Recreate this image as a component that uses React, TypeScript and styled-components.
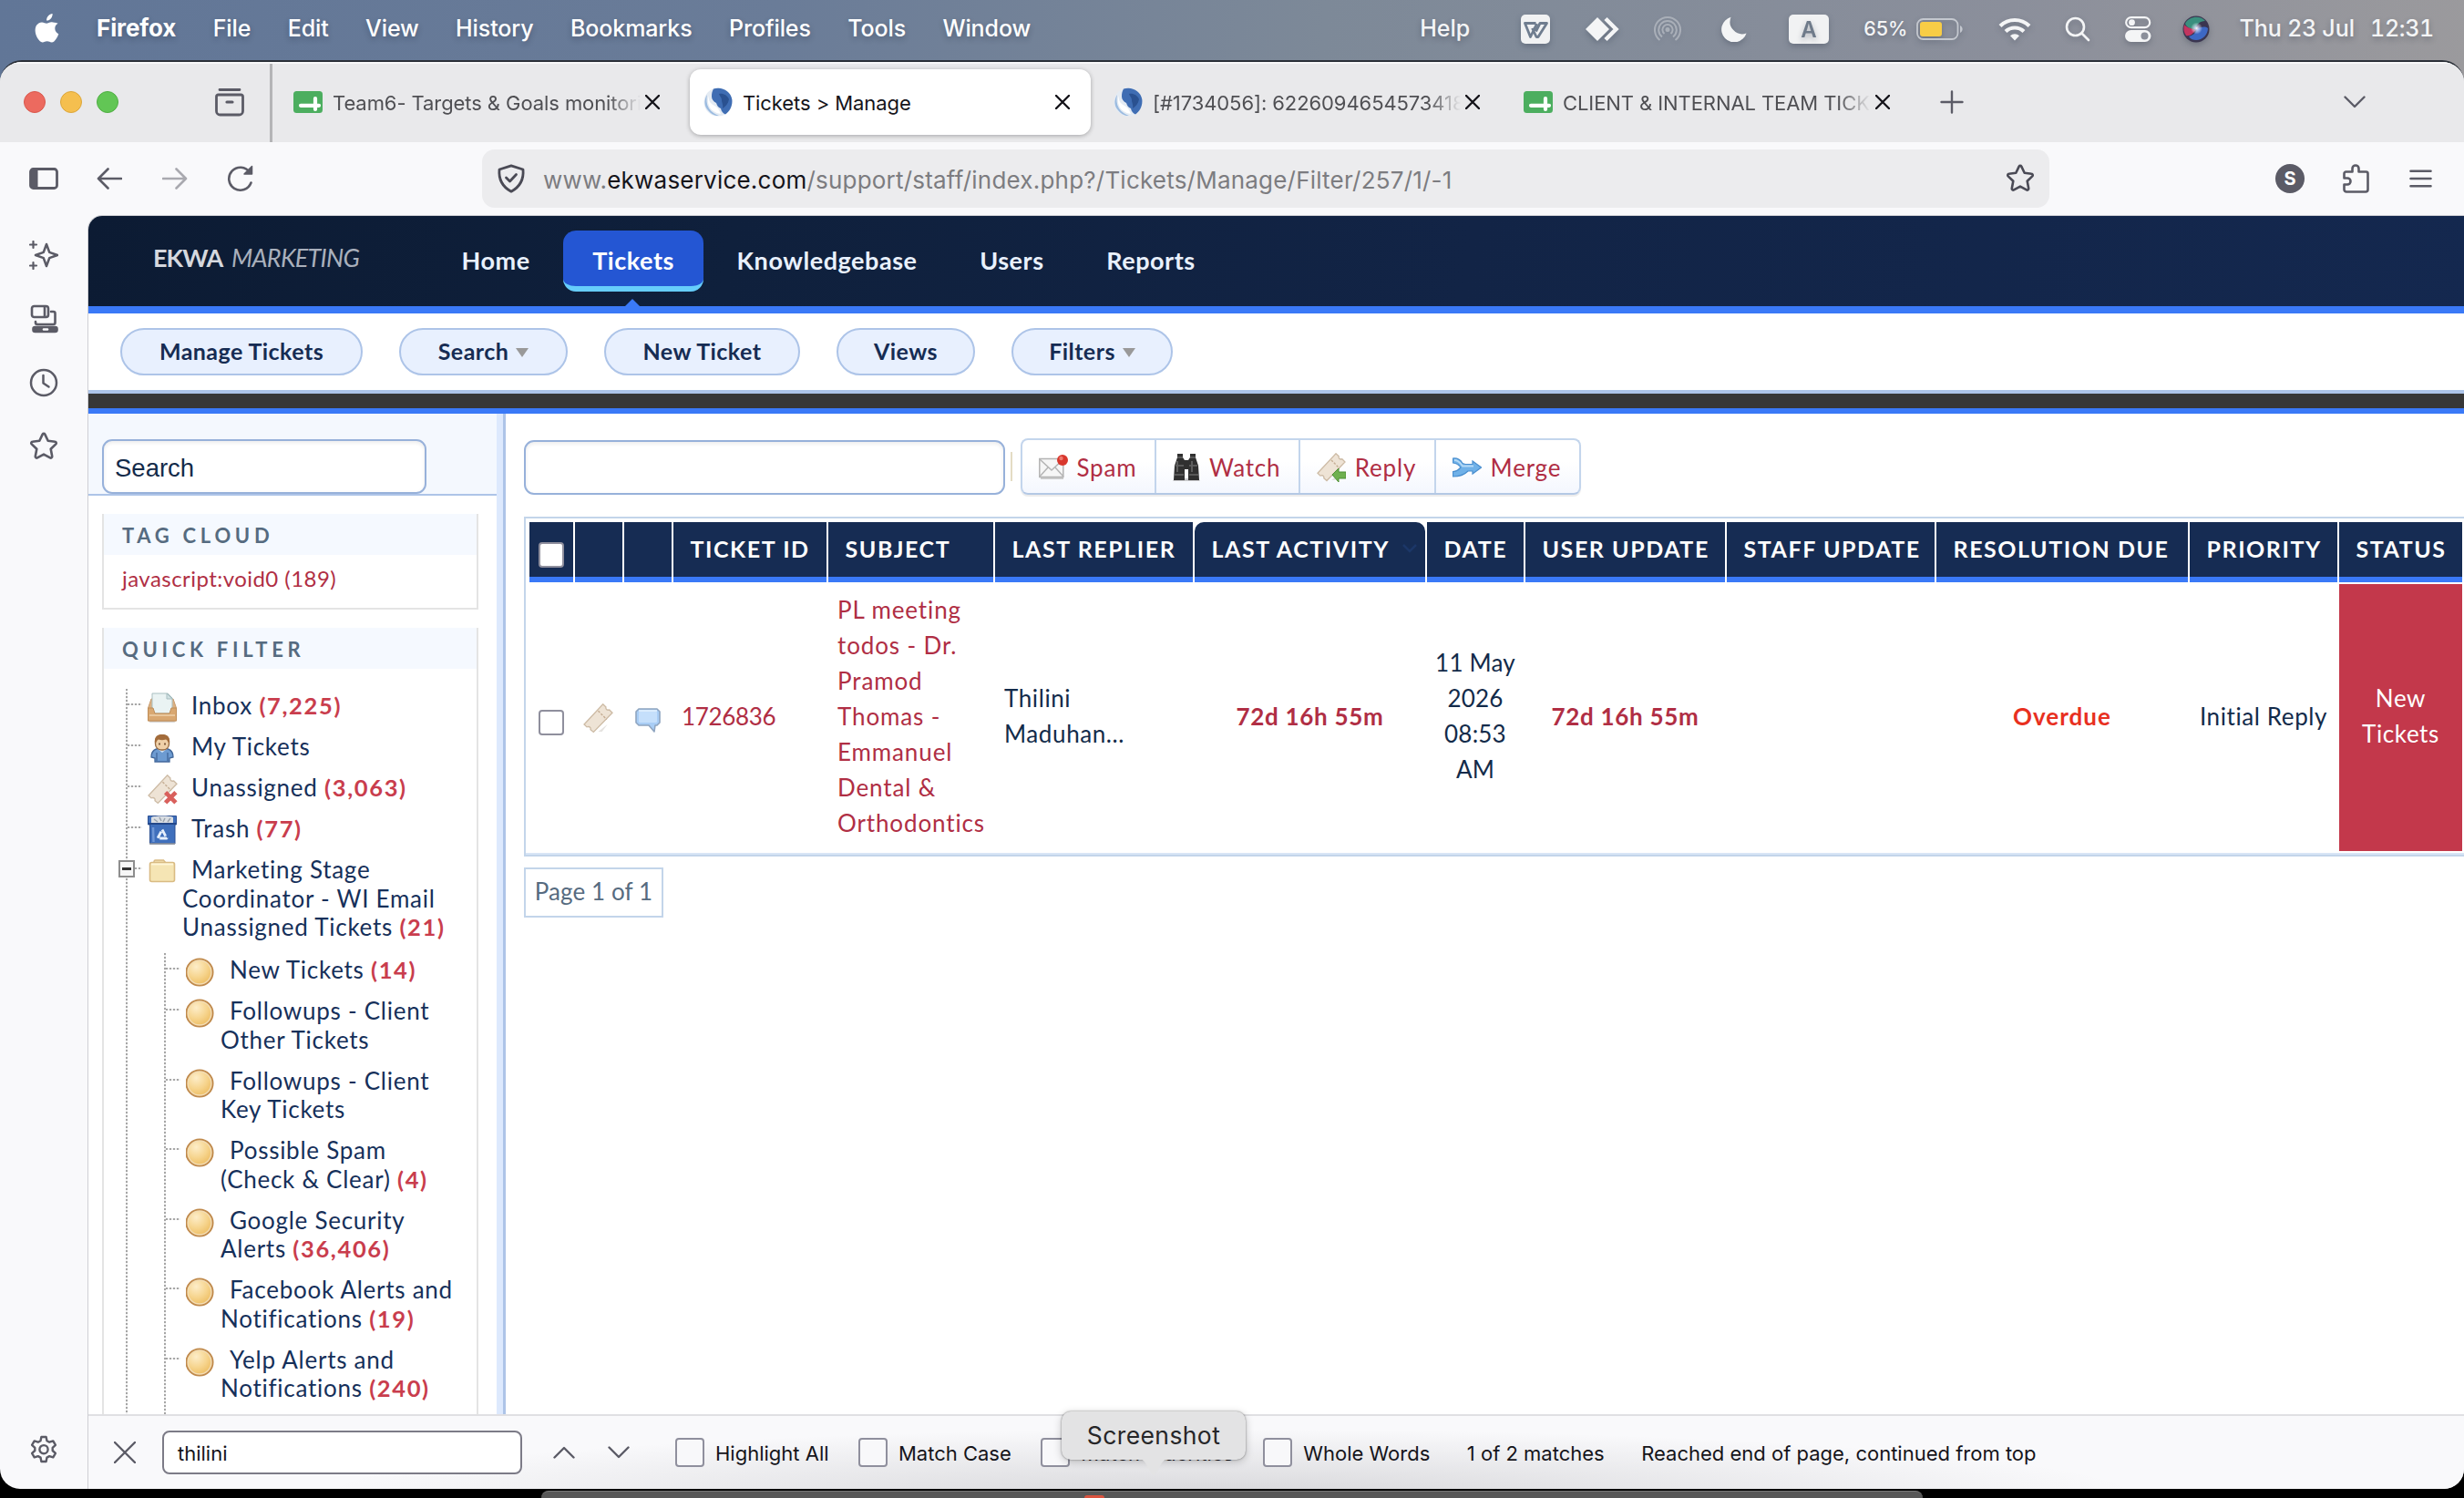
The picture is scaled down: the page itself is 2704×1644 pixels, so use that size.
import React from 'react';
import styled, { createGlobalStyle, css } from 'styled-components';

const UI = 'Inter, "Liberation Sans", sans-serif';
const SITE = 'Lato, "Open Sans", sans-serif';

const GlobalStyle = createGlobalStyle`
  * { box-sizing: border-box; }
  html, body { margin: 0; padding: 0; overflow: hidden; }
  body { font-family: ${UI}; }
  svg { display: block; flex: none; }
`;

const Screen = styled.div`
  position: relative;
  width: 2704px;
  height: 1644px;
  display: flex;
  flex-direction: column;
  overflow: hidden;
  background:
    linear-gradient(to bottom, transparent 800px, #000 800px),
    linear-gradient(95deg, #617697 0, #6a7c98 850px, #7d8998 1450px, #8b8f9b 2200px, #9b9a9d 2704px);
`;

/* ---------- macOS menu bar ---------- */

const MenuBar = styled.header`
  height: 66px;
  padding: 0 34px 4px 37px;
  display: flex;
  align-items: center;
  color: #fff;
  font-size: 25px;
  font-weight: 500;
  text-shadow: 0 3px 6px rgba(20, 30, 50, 0.3);
  white-space: nowrap;
`;
const MenuItems = styled.nav`
  display: flex;
  gap: 40.4px;
  margin-left: 39px;
`;
const MenuItem = styled.span<{ $strong?: boolean }>`
  font-weight: ${p => (p.$strong ? 700 : 500)};
  font-size: ${p => (p.$strong ? 26 : 25)}px;
  letter-spacing: -0.1px;
  line-height: 32px;
`;
const StatusArea = styled.div`
  display: flex;
  align-items: center;
  margin-left: auto;
  color: #f4f5f6;
`;
const Status = styled.span<{ $gap: number; $small?: boolean }>`
  margin-left: ${p => p.$gap}px;
  font-size: ${p => (p.$small ? 21.5 : 25)}px;
  display: flex;
  line-height: 32px;
  svg { filter: drop-shadow(0 3px 3px rgba(20, 30, 50, 0.25)); position: relative; top: 1px; }
`;
const Clock = styled.span`
  width: 69px;
  margin-left: 17px;
  line-height: 32px;
  font-variant-numeric: tabular-nums;
  letter-spacing: -0.3px;
`;

/* ---------- browser window ---------- */

const BrowserWindow = styled.div`
  height: 1568px;
  flex: none;
  display: flex;
  flex-direction: column;
  border-top: 2px solid #2b3038;
  border-radius: 24px 24px 22px 22px;
  overflow: hidden;
  background: #f9f9fb;
`;
const TabStrip = styled.div`
  height: 88px;
  flex: none;
  display: flex;
  align-items: center;
  padding: 0 108px 2px 26px;
  background: #e9e9eb;
  border-top: 2px solid #f8f8f9;
  color: #5b5b66;
`;
const Lights = styled.div`
  display: flex;
  gap: 16px;
  margin-right: 106px;
`;
const Light = styled.i<{ $color: string; $edge: string }>`
  width: 24px;
  height: 24px;
  border-radius: 50%;
  background: ${p => p.$color};
  border: 1px solid ${p => p.$edge};
`;
const StripDivider = styled.i`
  width: 3px;
  height: 86px;
  margin: 2px 8px 0 28px;
  background: #b4b4b6;
`;
const Tabs = styled.div`
  display: flex;
  gap: 10px;
  margin-right: 32px;
`;
const Tab = styled.div<{ $active?: boolean }>`
  width: 440px;
  height: 72px;
  padding: 0 23px 0 15px;
  display: flex;
  align-items: center;
  border-radius: 12px;
  font-size: 22px;
  color: #4f4f53;
  ${p => p.$active && css`
    background: #fff;
    color: #15141a;
    box-shadow: 0 1px 5px rgba(0, 0, 0, 0.3);
  `}
`;
const TabTitle = styled.span<{ $fade?: boolean }>`
  flex: 1;
  min-width: 0;
  margin: 2px 5px 0 11px;
  overflow: hidden;
  white-space: nowrap;
  letter-spacing: -0.08px;
  ${p => p.$fade && css`mask-image: linear-gradient(to right, #000 calc(100% - 36px), transparent);`}
`;
const PushRight = styled.div`margin-left: auto;`;

const Toolbar = styled.div`
  height: 80px;
  flex: none;
  display: flex;
  align-items: center;
  padding-left: 32px;
  color: #5b5b66;
`;
const ToolSlot = styled.span<{ $gap?: number; $dim?: boolean }>`
  margin-left: ${p => p.$gap ?? 0}px;
  opacity: ${p => (p.$dim ? 0.5 : 1)};
`;
const UrlBar = styled.div`
  width: 1720px;
  height: 64px;
  margin-left: 250px;
  padding: 0 16px;
  display: flex;
  align-items: center;
  border-radius: 14px;
  background: #ececee;
  color: #4a4a55;
`;
const Url = styled.span`
  flex: 1;
  margin: 3px 0 0 19px;
  font-size: 26px;
  letter-spacing: 0.21px;
  color: #7c7c80;
  b { font-weight: 400; color: #15141a; }
`;
const Avatar = styled.span`
  width: 32px;
  height: 32px;
  margin-left: 248px;
  border-radius: 50%;
  background: #5b5b66;
  color: #fff;
  font-size: 20px;
  font-weight: 700;
  display: flex;
  align-items: center;
  justify-content: center;
`;

const BrowserBody = styled.div`
  flex: 1;
  min-height: 0;
  display: flex;
`;
const Rail = styled.aside`
  width: 96px;
  padding: 28px 0 27px;
  display: flex;
  flex-direction: column;
  align-items: center;
  gap: 38px;
  color: #5b5b66;
  svg:last-child { margin-top: auto; }
`;
const Viewport = styled.div`
  flex: 1;
  min-width: 0;
  display: flex;
  flex-direction: column;
  border-left: 1px solid #cfcfd4;
  border-top: 1px solid #cfcfd4;
  border-top-left-radius: 16px;
  overflow: hidden;
`;
const Site = styled.div`
  flex: 1;
  min-height: 0;
  display: flex;
  flex-direction: column;
  overflow: hidden;
  background: #fff;
  font-family: ${SITE};
`;

/* ---------- help desk header ---------- */

const SiteHeader = styled.div`
  height: 107px;
  flex: none;
  display: flex;
  padding: 16px 0 0 71px;
  background: linear-gradient(100deg, #0c1b33 0, #0f203c 700px, #122446 1500px, #14284f 2607px);
  border-bottom: 8px solid #3a79f7;
`;
const Logo = styled.div`
  width: 306.5px;
  padding-top: 13px;
  font-size: 27px;
  line-height: 34px;
  letter-spacing: -0.9px;
  font-weight: 700;
  color: #d5d8de;
  i { font-weight: 400; color: #a9b0bc; margin-left: 5px; letter-spacing: -0.75px; }
`;
const MainNav = styled.nav`
  display: flex;
  align-items: flex-start;
  gap: 4.6px;
`;
const NavLink = styled.a<{ $active?: boolean }>`
  position: relative;
  height: 67px;
  padding: 4px 32px 0;
  display: flex;
  align-items: center;
  font-size: 27px;
  font-weight: 700;
  letter-spacing: 0.55px;
  color: #e9f1fd;
  border-bottom: 6px solid transparent;
  border-radius: 14px;
  ${p => p.$active && css`
    color: #fff;
    background: #2456d3;
    border-bottom-color: #66cdfb;
    &::after {
      content: '';
      position: absolute;
      left: 50%;
      top: 75px;
      margin-left: -9px;
      border: 8px solid transparent;
      border-top: 0;
      border-bottom-color: #3a79f7;
    }
  `}
`;
const SubNav = styled.div`
  height: 88px;
  flex: none;
  padding: 16px 0 0 35px;
  display: flex;
  gap: 40px;
  background: #fff;
  border-bottom: 4px solid #adc4e8;
`;
const Pill = styled.a<{ $width: number }>`
  width: ${p => p.$width}px;
  height: 52px;
  padding-bottom: 3px;
  display: flex;
  align-items: center;
  justify-content: center;
  gap: 8px;
  border: 2px solid #adc4e8;
  border-radius: 26px;
  background: #e8f0fe;
  color: #162c53;
  font-size: 25px;
  font-weight: 700;
  letter-spacing: 0.45px;
`;
const Caret = styled.i`
  margin-top: 4px;
  border: 7px solid transparent;
  border-top: 10px solid #999;
  border-bottom: 0;
`;
const DarkStrip = styled.div`
  height: 22px;
  flex: none;
  background: #373737;
  border-bottom: 6px solid #3a79f7;
`;
const Columns = styled.div`
  flex: 1;
  min-height: 0;
  display: flex;
`;

/* ---------- left column ---------- */

const Sidebar = styled.aside`
  width: 448px;
  flex: none;
  overflow: hidden;
`;
const Splitter = styled.div`
  width: 10px;
  flex: none;
  background: #dde9fd;
  border-right: 3px solid #adc4e8;
`;
const SearchHead = styled.div`
  height: 90px;
  padding: 28px 0 0 15px;
  background: #f4f8fe;
  border-bottom: 2px solid #adc4e8;
`;
const SearchBox = styled.div`
  width: 356px;
  height: 60px;
  padding: 4px 0 0 12px;
  display: flex;
  align-items: center;
  border: 2px solid #97b1da;
  border-radius: 11px;
  background: #fff;
  box-shadow: inset 0 2px 4px rgba(0, 0, 0, 0.08);
  font-family: "Liberation Sans", Arial, sans-serif;
  font-size: 27.5px;
  color: #132b4a;
`;
const Panel = styled.section`
  width: 413px;
  margin: 20px 0 0 15px;
  border: 2px solid #e4e4e4;
  border-top: 0;
`;
const PanelTitle = styled.h3`
  height: 45px;
  margin: 0;
  padding: 2px 0 0 20px;
  display: flex;
  align-items: center;
  background: #f5f9ff;
  color: #566b80;
  font-size: 22px;
  font-weight: 700;
  letter-spacing: 4.7px;
`;
const TagLink = styled.a`
  height: 58px;
  padding: 0 0 7px 20px;
  display: flex;
  align-items: center;
  color: #b02e44;
  font-size: 24px;
  letter-spacing: 0.45px;
`;

const dots = css`
  background-image: repeating-linear-gradient(to bottom, #a6a6a6 0 2px, #f2f2f2 2px 4px);
  background-repeat: no-repeat;
`;
const Tree = styled.ul`
  list-style: none;
  margin: 22px 0 0;
  padding: 0 0 0 26px;
  ${dots}
  background-size: 2px 100%;
  background-position: 24px 0;
`;
const SubTree = styled.ul`
  list-style: none;
  margin: 2px 0 0 40px;
  padding: 0 0 60px 2px;
  ${dots}
  background-size: 2px 100%;
`;
const Node = styled.li`
  position: relative;
  display: grid;
  grid-template-columns: 16px 32px 1fr;
  column-gap: 6px;
  padding: 3px 0 10.5px;
  > svg { margin: 1px 0 -6px; }
`;
const Connector = styled.i`
  height: 2px;
  margin-top: 13px;
  background: repeating-linear-gradient(to right, #a6a6a6 0 2px, #f2f2f2 2px 4px);
`;
const Toggle = styled.span`
  position: absolute;
  left: -10px;
  top: 8px;
  width: 18px;
  height: 19px;
  border: 2px solid #8e8e8e;
  background: #f7f7f7;
  display: flex;
  align-items: center;
  justify-content: center;
  &::before { content: ''; width: 10px; height: 3px; background: #333; }
`;
const NodeLabel = styled.span`
  font-size: 26px;
  line-height: 31.5px;
  letter-spacing: 0.74px;
  text-indent: 10px;
  white-space: pre;
  color: #16305a;
  b { color: #c93d4d; font-weight: 700; letter-spacing: 1.65px; font-size: 25.5px; }
`;

/* ---------- ticket grid ---------- */

const Main = styled.main`
  flex: 1;
  min-width: 0;
  padding: 27px 0 0 20px;
`;
const ActionRow = styled.div`
  height: 62px;
  display: flex;
  align-items: center;
`;
const QueryBox = styled.div`
  width: 528px;
  height: 60px;
  margin-top: 2px;
  border: 2px solid #97b1da;
  border-radius: 11px;
  box-shadow: inset 0 2px 4px rgba(0, 0, 0, 0.08);
`;
const ThinRule = styled.i`
  width: 2px;
  height: 32px;
  margin: 0 9px 0 6px;
  background: #e4dcc4;
`;
const ActionGroup = styled.div`
  display: flex;
  height: 62px;
  border: 2px solid #c3d5ec;
  border-bottom-color: #b4c8e4;
  border-radius: 8px;
  background: linear-gradient(#fff 40%, #f4f7fe);
  box-shadow: 0 2px 1px #ececec;
`;
const Action = styled.a`
  padding: 2px 20px 0 18px;
  display: flex;
  align-items: center;
  gap: 9.5px;
  color: #b02e44;
  font-size: 26px;
  letter-spacing: 0.8px;
  & + & { border-left: 2px solid #c3d5ec; }
`;
const GridFrame = styled.div`
  margin-top: 24px;
  padding: 4px 0 2px 4px;
  border: 2px solid #c3d5ea;
  border-right: 0;
  box-shadow: inset 0 -2px 0 #d8e5f6;
`;
const columns = '48px 52px 52px 168px 181px 217px 253px 106px 219px 228px 276px 162px 135px';
const GridRow = styled.div`
  display: grid;
  grid-template-columns: ${columns};
  column-gap: 2px;
  & + & { margin-top: 2px; padding-bottom: 2px; }
`;
const HeadCell = styled.div<{ $sorted?: boolean; $box?: boolean }>`
  height: 66px;
  padding: ${p => (p.$box ? '12px 0 0 10px' : '0 0 2px 18.5px')};
  display: flex;
  align-items: center;
  background: #162c53;
  border-bottom: 6px solid #3a79f7;
  border-radius: ${p => (p.$sorted ? '10px 10px 0 0' : 0)};
  color: #fff;
  font-size: 25px;
  font-weight: 700;
  letter-spacing: 1.55px;
  white-space: nowrap;
  svg { margin-left: 14px; }
`;
const Cell = styled.div<{ $align?: 'center'; $tone?: 'link' | 'age' | 'late' | 'status'; $pad?: number; $drop?: number; $track?: number }>`
  min-height: 293px;
  padding: ${p => p.$drop ?? 0}px 0 ${p => (p.$drop ? 0 : 3)}px ${p => p.$pad ?? 0}px;
  display: flex;
  align-items: center;
  justify-content: ${p => (p.$align ? 'center' : 'flex-start')};
  text-align: ${p => p.$align ?? 'left'};
  font-size: 26px;
  line-height: 39px;
  letter-spacing: ${p => p.$track ?? 0.6}px;
  white-space: pre;
  color: #132b4a;
  ${p => p.$tone === 'link' && css`color: #b02e44;`}
  ${p => p.$tone === 'age' && css`color: #b02e44; font-weight: 700;`}
  ${p => p.$tone === 'late' && css`color: #e8301f; font-weight: 700;`}
  ${p => p.$tone === 'status' && css`background: #c3384b; color: #fff;`}
`;
const Checkbox = styled.i<{ $size?: number }>`
  width: ${p => p.$size ?? 28}px;
  height: ${p => p.$size ?? 28}px;
  flex: none;
  border: 2px solid #8f8f9d;
  border-radius: 4px;
  background: #fff;
`;
const Pager = styled.div`
  width: 153px;
  height: 55px;
  margin-top: 12px;
  padding-bottom: 3px;
  display: flex;
  align-items: center;
  justify-content: center;
  border: 2px solid #c3d5ea;
  color: #566b80;
  font-size: 26px;
  letter-spacing: 0.1px;
`;

/* ---------- find bar, dock ---------- */

const FindBar = styled.div`
  height: 82px;
  flex: none;
  display: flex;
  align-items: center;
  padding-left: 28px;
  border-top: 2px solid #e0e0e3;
  background:
    radial-gradient(ellipse 1000px 74px at 1253px 88px, rgba(40, 40, 50, 0.16), transparent),
    #f9f9fb;
  color: #15141a;
  font-size: 22px;
  white-space: nowrap;
  svg { color: #5b5b66; }
`;
const FindField = styled.div`
  width: 395px;
  height: 48px;
  margin: 0 34px 0 29px;
  padding: 1px 0 0 15px;
  display: flex;
  align-items: center;
  border: 2px solid #7c7b87;
  border-radius: 8px;
  background: #fff;
`;
const Options = styled.div`
  display: flex;
  gap: 32.4px;
  margin-left: 50px;
`;
const Option = styled.span`
  display: flex;
  align-items: center;
  gap: 12px;
  i { background: #f8f8fa; }
  span { margin-top: 1px; }
`;
const FindNote = styled.span`
  margin: 1px 0 0 40.5px;
`;
const DockEdge = styled.div`
  height: 8px;
  margin: 2px 594px 0;
  border-radius: 10px 10px 0 0;
  border-top: 1px solid #777;
  background: #575757;
  display: flex;
  justify-content: center;
  align-items: flex-end;
  padding-right: 303px;
`;
const DockGlint = styled.i`
  width: 22px;
  height: 3px;
  border-radius: 10px 10px 0 0;
  background: #d9533f;
`;
const Tooltip = styled.div`
  position: absolute;
  left: 1165px;
  top: 1549px;
  width: 202px;
  height: 53px;
  display: flex;
  align-items: center;
  justify-content: center;
  padding-bottom: 1px;
  border-radius: 10px;
  background: #e3e3e4;
  color: #262628;
  font-size: 26.5px;
  letter-spacing: 0.4px;
  box-shadow: 0 0 2px rgba(0, 0, 0, 0.5), 0 2px 10px rgba(0, 0, 0, 0.22);
  svg { position: absolute; left: 85px; top: 52px; }
`;

/* ---------- icons ---------- */

type P = { children: React.ReactNode; w?: number; h?: number; box?: string; sw?: number };
const Line = ({ children, w = 32, h = 32, box, sw = 2.6 }: P) => (
  <svg width={w} height={h} viewBox={box ?? `0 0 ${w} ${h}`} fill="none" stroke="currentColor" strokeWidth={sw} strokeLinecap="round" strokeLinejoin="round">
    {children}
  </svg>
);

const Apple = () => (
  <svg width="30" height="34" viewBox="0 0 30 34" fill="#fff">
    <path d="M20.6 1c.2 2-.6 3.900-1.700 5.300-1.200 1.400-3 2.400-4.800 2.300-.2-1.900.7-3.900 1.800-5.100C17.100 2.100 19 1.100 20.600 1z" />
    <path d="M26.600 11.800c-2.200 1.300-3.300 3.100-3.300 5.500 0 2.700 1.600 4.900 4 5.900-.6 1.900-1.600 3.900-2.900 5.700-1.300 1.800-2.600 3.500-4.700 3.600-2 0-2.700-1.200-5-1.200s-3.100 1.200-5 1.200c-2.100.1-3.600-1.900-4.900-3.700C2.200 25.200.300 18.600 2.900 14.100c1.300-2.200 3.600-3.600 6.100-3.700 2 0 3.900 1.300 5.100 1.300 1.200 0 3.500-1.600 5.900-1.400 1 .1 4.300.5 6.600 1.500z" />
  </svg>
);
const SheetIcon = () => (
  <svg width="32" height="24" viewBox="0 0 32 24">
    <rect width="32" height="24" rx="3.500" fill="#4cae5f" />
    <path d="M8 15.800h20M24 8v12" stroke="#fff" strokeWidth="4.200" strokeLinecap="round" />
  </svg>
);
const GlobeIcon = () => (
  <svg width="32" height="32" viewBox="0 0 32 32">
    <circle cx="16" cy="16" r="15.500" fill="#e4ebf3" />
    <path d="M11 1.500C20-1.500 30 4 31.300 13c.8 7-2.300 13-7.300 16.500-2.500-1-4.500-3.500-5-6.500-3-1-4-3-5-6-3-1.500-5-4-5-7 0-3.500.5-6 2-8.500z" fill="#3f6db3" />
    <path d="M17 7c4-1 9 1 11 6-1 5-4 8-7 10 1-4-1-6-1-9s-2-4-3-7z" fill="#2a5190" />
    <path d="M4 8c-4 6-3 13 1 17 3 4 8 6.500 12 6-5-2-8-4-11-8-3-5-3-10-2-15z" fill="#9bbbe0" />
    <path d="M6 9c-1 7 3 9 6 11 3 1 5 4 7 9-6-1-11-4-13-9-1.500-4-1.500-7 0-11z" fill="#fff" />
  </svg>
);
const CloseX = ({ s = 16, sw = 2.4 }: { s?: number; sw?: number }) => (
  <svg width={s} height={s} viewBox={`0 0 ${s} ${s}`} stroke={s > 20 ? '#5b5b66' : '#15141a'} strokeWidth={sw} strokeLinecap="round">
    <path d={`M1 1L${s - 1} ${s - 1}M${s - 1} 1L1 ${s - 1}`} />
  </svg>
);
const StarLine = () => (
  <Line>
    <path d="M14.700 2.600a1.500 1.500 0 0 1 2.600 0l3.400 7.200 7.700 1a1.500 1.500 0 0 1 .9 2.600l-5.600 5.400 1.500 8a1.500 1.500 0 0 1-2.200 1.600L16 24.600l-7 3.800a1.500 1.500 0 0 1-2.200-1.600l1.500-8-5.600-5.400a1.500 1.500 0 0 1 .9-2.600l7.700-1z" />
  </Line>
);
const Ticket = ({ size = 33, children }: { size?: number; children?: React.ReactNode }) => (
  <svg width={size} height={size} viewBox="0 0 32 32">
    <path d="M9 30l7 0 10-8-6 8z" fill="#d3d0cc" opacity=".6" />
    <path d="M21 .8l3.200 3c-.4 1.600.4 2.900 2 3.200l1.600-.2 3.200 3.200L11 30.500l-3.200-2.700c.4-1.800-.6-3-2.200-3.100l-1.700.4L1 22.300z" fill="#eee3d5" stroke="#cdbba5" strokeWidth="1.300" />
    <path d="M16 8l9 9" stroke="#c5ae94" strokeWidth="1.400" strokeDasharray="2.500 1.500" />
    {children}
  </svg>
);
const InboxIcon = () => (
  <svg width="32" height="34" viewBox="0 0 32 34">
    <path d="M3 30h26l1 3H2z" fill="#bbb" opacity=".6" />
    <path d="M4 7h24l3.500 10v14H.500V17z" fill="#dcb183" stroke="#c79a6b" />
    <path d="M5 1h17l5 5v17H5z" fill="#eaf3f3" stroke="#a9bfc1" />
    <path d="M21 1v6h6z" fill="#cfe0e2" stroke="#a9bfc1" />
    <path d="M.5 17H6l2 6h16l2-6h5.500v14H.500z" fill="#d9a871" stroke="#bf8d58" />
    <path d="M2 25h28" stroke="#e9c79c" strokeWidth="2" />
  </svg>
);
const PersonIcon = () => (
  <svg width="32" height="32" viewBox="0 0 32 32">
    <path d="M4 26c0-7 4-10 12-10s12 3 12 10l-4 1v4H8v-4z" fill="#6d9bd1" stroke="#41679a" strokeWidth="1.300" />
    <path d="M10 21v9M22 21v9" stroke="#41679a" strokeWidth="1.300" />
    <path d="M11 17l5 4 5-4v-3H11z" fill="#cfe2f6" />
    <rect x="8.500" y="2" width="15" height="16" rx="6.500" fill="#efd0a8" stroke="#96683e" strokeWidth="1.300" />
    <path d="M8 11C7 3 11 1 16 1s9 2 8 10c-2-1-2-4-4-4.500-3 1-6 .8-8 0C10 7 10 10 8 11z" fill="#a36c3b" />
    <path d="M13 10.500v2M19 10.500v2" stroke="#6b4426" strokeWidth="1.600" />
  </svg>
);
const TrashIcon = () => (
  <svg width="32" height="33" viewBox="0 0 32 33">
    <path d="M.5.500h31v9.500h-1.500v21H2.500V10H.5z" fill="#3f6fbc" stroke="#2b4f92" />
    <path d="M4 2c3-2 21-2 24 0v6H4z" fill="#d9dde2" />
    <path d="M7 4l4 3M13 2l2 4M19 3l-2 4M25 3l-3 4" stroke="#9aa3ad" strokeWidth="1.500" />
    <path d="M1 9h30" stroke="#24488b" strokeWidth="2" />
    <path d="M6 13l.5 16" stroke="#6f97d6" strokeWidth="2.500" />
    <path d="M16 15.500l5 9.500H11z" fill="none" stroke="#e7f0fc" strokeWidth="2.800" strokeLinejoin="round" strokeDasharray="8 2.500" />
    <path d="M2 31h28" stroke="#9a9a9a" strokeWidth="2" opacity=".7" />
  </svg>
);
const FolderIcon = () => (
  <svg width="32" height="32" viewBox="0 0 32 32">
    <path d="M7 7V5.500Q7 4 8.500 4h9L20 7z" fill="#f3e0b0" stroke="#d9bb83" strokeWidth="1.400" />
    <rect x="2.500" y="6.500" width="27" height="21" rx="2" fill="#f5e5b4" stroke="#d9bb83" strokeWidth="1.600" />
    <path d="M4 8.500h24" stroke="#fff6d8" strokeWidth="1.800" />
  </svg>
);
const CoinIcon = () => (
  <svg width="32" height="34" viewBox="0 0 32 34">
    <defs>
      <radialGradient id="coin" cx=".35" cy=".25" r=".9">
        <stop offset="0" stopColor="#fdedc9" />
        <stop offset=".55" stopColor="#f6d48d" />
        <stop offset="1" stopColor="#ecba5c" />
      </radialGradient>
    </defs>
    <circle cx="15" cy="17" r="14.600" fill="#f3ddb4" stroke="#c08a4c" strokeWidth="1.900" />
    <circle cx="15" cy="17" r="12.200" fill="url(#coin)" />
  </svg>
);
const SpamIcon = () => (
  <svg width="32" height="32" viewBox="0 0 32 32">
    <path d="M2 27h25v2H2z" fill="#ccc" />
    <rect x=".8" y="6.500" width="26" height="20" fill="#f6f6f6" stroke="#b3b3b3" strokeWidth="1.500" />
    <path d="M1 7l13 12L27 7M1 26l9-10M27 26l-9-10" fill="none" stroke="#b5b5b5" strokeWidth="1.500" />
    <circle cx="26" cy="8" r="6" fill="#d8372d" />
    <circle cx="24.500" cy="6" r="2.200" fill="#ee7a70" />
  </svg>
);
const WatchIcon = () => (
  <svg width="30" height="32" viewBox="0 0 30 32">
    <path d="M0 31h30l-2-3H2z" fill="#aaa" opacity=".6" />
    <path d="M5 1h6v4l2 3h4l2-3V1h6v4l3 9 1 16H17V18h-4v12H1L2 14l3-9z" fill="#303030" />
    <path d="M5 5h6M19 5h6M3 14h9M18 14h9M2 24h10M18 24h10" stroke="#666" strokeWidth="1.500" />
    <path d="M5 9v12M21 9v12" stroke="#5e5e5e" strokeWidth="2" />
  </svg>
);
const MergeIcon = () => (
  <svg width="32" height="22" viewBox="0 0 32 22">
    <path d="M.5 1c5-.5 8 1 10.500 5.500l3 1h8V4l9.500 7-9.500 7v-3h-5c-4 4-8 6-16.500 6v-5.500c4 0 6-1.500 8.500-4.500C7 8 5 6.500.500 6z" fill="#6fb1e8" stroke="#4a8fcf" strokeWidth="1.200" />
    <path d="M2 3c4 0 6 2 9 6.500h12" stroke="#b5daf6" strokeWidth="1.800" fill="none" />
  </svg>
);
const ChatIcon = () => (
  <svg width="30" height="28" viewBox="0 0 30 28">
    <path d="M5 2h20l3 3v12l-3 3h-2l-1 7-6-7H5l-3-3V5z" fill="#a9cdf5" stroke="#8fa5c0" strokeWidth="1.600" strokeLinejoin="round" />
    <rect x="5" y="4.500" width="20" height="12.500" rx="1.500" fill="#c5dffb" />
    <path d="M5 4h20" stroke="#e8f3fe" strokeWidth="1.500" />
  </svg>
);

/* ---------- data ---------- */

type TreeItem = { label: string; count?: string; icon?: React.ReactNode };
const filters: TreeItem[] = [
  { label: 'Inbox', count: '(7,225)', icon: <InboxIcon /> },
  { label: 'My Tickets', icon: <PersonIcon /> },
  {
    label: 'Unassigned', count: '(3,063)',
    icon: <Ticket size={33}><path d="M19 19l11 11M30 19l-11 11" stroke="#d9605c" strokeWidth="4.500" /></Ticket>,
  },
  { label: 'Trash', count: '(77)', icon: <TrashIcon /> },
];
const stageFilters: TreeItem[] = [
  { label: 'New Tickets', count: '(14)' },
  { label: 'Followups - Client\nOther Tickets' },
  { label: 'Followups - Client\nKey Tickets' },
  { label: 'Possible Spam\n(Check & Clear)', count: '(4)' },
  { label: 'Google Security\nAlerts', count: '(36,406)' },
  { label: 'Facebook Alerts and\nNotifications', count: '(19)' },
  { label: 'Yelp Alerts and\nNotifications', count: '(240)' },
];
const headings = ['TICKET ID', 'SUBJECT', 'LAST REPLIER', 'LAST ACTIVITY', 'DATE', 'USER UPDATE', 'STAFF UPDATE', 'RESOLUTION DUE', 'PRIORITY', 'STATUS'];
const menus = ['File', 'Edit', 'View', 'History', 'Bookmarks', 'Profiles', 'Tools', 'Window'];

const TreeNode = ({ item, open }: { item: TreeItem; open?: boolean }) => (
  <Node>
    {open && <Toggle />}
    <Connector />
    {item.icon ?? <CoinIcon />}
    <NodeLabel>{item.label}{item.count && <> <b>{item.count}</b></>}</NodeLabel>
  </Node>
);

const StatusIcons = () => (
  <StatusArea>
    <span>Help</span>
    <Status $gap={56}>
      <svg width="32" height="32" viewBox="0 0 32 32">
        <rect width="32" height="32" rx="5" fill="#f1f2f3" />
        <path d="M16.500 9.500H4.500l6 15L17.500 10M12.500 15l4.500 9.500h2L28.500 9.500H21l-4.500 9" fill="none" stroke="#6f7d8f" strokeWidth="2.800" strokeLinejoin="round" />
      </svg>
    </Status>
    <Status $gap={38}>
      <svg width="38" height="28" viewBox="0 0 38 28">
        <path d="M14 1L27 14 14 27 1 14z" fill="#f4f5f6" />
        <path d="M23 2.500L34.500 14 23 25.500" fill="none" stroke="#f4f5f6" strokeWidth="4.500" />
      </svg>
    </Status>
    <Status $gap={38}>
      <svg width="30" height="30" viewBox="0 0 30 30" fill="none" stroke="#fff" strokeWidth="2" opacity=".3">
        <path d="M6.500 27a14 14 0 1 1 17 0M9 23.500a9.800 9.800 0 1 1 12 0M11.500 20a5.600 5.600 0 1 1 7 0" />
        <circle cx="15" cy="15.500" r="1.500" fill="#fff" />
      </svg>
    </Status>
    <Status $gap={44}>
      <svg width="28" height="28" viewBox="0 0 28 28"><path d="M10.500.800A14 14 0 1 0 27.500 18.500 13.500 13.500 0 0 1 10.500.800z" fill="#f4f5f6" /></svg>
    </Status>
    <Status $gap={46}>
      <svg width="44" height="32" viewBox="0 0 44 32">
        <rect width="44" height="32" rx="5" fill="#f1f2f3" />
        <text x="22" y="25" textAnchor="middle" fontFamily="Inter" fontWeight="600" fontSize="24" fill="#6f7b8a">A</text>
      </svg>
    </Status>
    <Status $gap={38} $small>65%</Status>
    <Status $gap={10}>
      <svg width="52" height="24" viewBox="0 0 52 24">
        <rect x="1" y="1" width="44.500" height="22" rx="6.500" fill="none" stroke="#c4c8cf" strokeWidth="1.800" />
        <rect x="4" y="4" width="24" height="16" rx="3" fill="#f8cd46" />
        <path d="M48 8c3.500 1.500 3.500 6.500 0 8z" fill="#c4c8cf" />
      </svg>
    </Status>
    <Status $gap={38}>
      <svg width="36" height="26" viewBox="0 0 36 26" fill="none" stroke="#f4f5f6" strokeWidth="4.200">
        <path d="M2 9.500a23 23 0 0 1 32 0M8 15.500a14.500 14.500 0 0 1 20 0" />
        <path d="M18 25.500l-5-5.300a7.500 7.500 0 0 1 10 0z" fill="#f4f5f6" stroke="none" />
      </svg>
    </Status>
    <Status $gap={37}>
      <svg width="28" height="28" viewBox="0 0 28 28" fill="none" stroke="#f4f5f6" strokeWidth="2.600" strokeLinecap="round">
        <circle cx="11.500" cy="11.500" r="9.500" /><path d="M18.500 18.500l7.500 7.500" />
      </svg>
    </Status>
    <Status $gap={38}>
      <svg width="29" height="28" viewBox="0 0 29 28">
        <rect x="1.200" y="1.200" width="26" height="11" rx="5.500" fill="none" stroke="#f4f5f6" strokeWidth="2.200" />
        <circle cx="7.500" cy="6.700" r="3.400" fill="#f4f5f6" />
        <rect y="15" width="28.500" height="13" rx="6.500" fill="#f4f5f6" />
        <circle cx="21.500" cy="21.500" r="4" fill="#8b8f9a" />
      </svg>
    </Status>
    <Status $gap={34}>
      <svg width="30" height="30" viewBox="0 0 30 30">
        <defs>
          <radialGradient id="siri"><stop offset="0" stopColor="#fff" /><stop offset=".35" stopColor="#dfe4ff" stopOpacity=".7" /><stop offset="1" stopColor="#fff" stopOpacity="0" /></radialGradient>
        </defs>
        <circle cx="15" cy="15" r="14.500" fill="#3a3550" />
        <path d="M3 9C6 1 20-1 25 6c-6 0-10 4-11 9C10 15 5 14 3 9z" fill="#3a8f7e" />
        <path d="M2 10c3 4 9 4 12 6-2 4-6 7-10 6C1 18 1 14 2 10z" fill="#c2355f" />
        <path d="M16 15c5-3 9-3 12-1 0 7-6 13-13 13-3 0-6-1-8-4 4-1 7-3 9-8z" fill="#3d68c4" />
        <circle cx="15.500" cy="14" r="6.500" fill="url(#siri)" />
      </svg>
    </Status>
    <Status $gap={32}>Thu 23 Jul</Status>
    <Clock>12:31</Clock>
  </StatusArea>
);

export default function App() {
  return (
    <Screen>
      <GlobalStyle />
      <MenuBar>
        <Apple />
        <MenuItems>
          <MenuItem $strong>Firefox</MenuItem>
          {menus.map(m => <MenuItem key={m}>{m}</MenuItem>)}
        </MenuItems>
        <StatusIcons />
      </MenuBar>

      <BrowserWindow>
        <TabStrip>
          <Lights>
            <Light $color="#ec6a5f" $edge="#d9574c" />
            <Light $color="#f5bf4f" $edge="#dca63a" />
            <Light $color="#62c655" $edge="#4fae43" />
          </Lights>
          <Line sw={2.800}>
            <path d="M5 2.500h22M3.500 8h25M3.500 8a2 2 0 0 0-2 2v16a4 4 0 0 0 4 4h21a4 4 0 0 0 4-4V10a2 2 0 0 0-2-2" />
            <path d="M13 16h6" strokeWidth="3.200" />
          </Line>
          <StripDivider />
          <Tabs>
            <Tab><SheetIcon /><TabTitle $fade>Team6- Targets &amp; Goals monitoring</TabTitle><CloseX /></Tab>
            <Tab $active><GlobeIcon /><TabTitle>Tickets &gt; Manage</TabTitle><CloseX /></Tab>
            <Tab><GlobeIcon /><TabTitle $fade>[#1734056]: 62260946545734180</TabTitle><CloseX /></Tab>
            <Tab><SheetIcon /><TabTitle $fade>CLIENT &amp; INTERNAL TEAM TICKETS</TabTitle><CloseX /></Tab>
          </Tabs>
          <Line w={26} h={26} sw={2.400}><path d="M13 1.500v23M1.500 13h23" /></Line>
          <PushRight><Line w={24} h={14} sw={2.400}><path d="M1.500 1.500L12 12 22.500 1.500" /></Line></PushRight>
        </TabStrip>

        <Toolbar>
          <Line w={32} h={24} sw={2.800}>
            <rect x="1.500" y="1.500" width="29" height="21" rx="3" />
            <path d="M2 3h7v18H2z" fill="currentColor" strokeWidth="1" />
          </Line>
          <ToolSlot $gap={42}><Line w={28} h={24}><path d="M27 12H2M12.500 1.500L2 12l10.500 10.500" /></Line></ToolSlot>
          <ToolSlot $gap={44} $dim><Line w={28} h={24}><path d="M1 12h25M15.500 1.500L26 12 15.500 22.500" /></Line></ToolSlot>
          <ToolSlot $gap={43}>
            <Line w={30} h={30}>
              <path d="M26.500 19.500A12.500 12.500 0 1 1 25 8" /><path d="M27.500 1.500v8.500H19z" fill="currentColor" strokeWidth="1.500" />
            </Line>
          </ToolSlot>
          <UrlBar>
            <Line w={32} h={32} sw={2.800}>
              <path d="M16 1.800l13 4.200c.8 9-2.500 18.500-13 24.200C5.500 24.500 2.200 15 3 6z" /><path d="M10.500 15l4 4 7-7.500" />
            </Line>
            <Url>www.<b>ekwaservice.com</b>/support/staff/index.php?/Tickets/Manage/Filter/257/1/-1</Url>
            <StarLine />
          </UrlBar>
          <Avatar>S</Avatar>
          <ToolSlot $gap={42}>
            <Line w={29} h={32}>
              <path d="M10.500 8.500V5a3.500 3.500 0 0 1 7 0v3.500h8a2 2 0 0 1 2 2V28a2.500 2.500 0 0 1-2.500 2.500H4A2.500 2.500 0 0 1 1.500 28v-5.500H5a3.500 3.500 0 0 0 0-7H1.500v-5a2 2 0 0 1 2-2z" />
            </Line>
          </ToolSlot>
          <ToolSlot $gap={44}><Line w={25} h={20} sw={2.600}><path d="M1.500 1.800h22M1.500 10h22M1.500 18.200h22" /></Line></ToolSlot>
        </Toolbar>

        <BrowserBody>
          <Rail>
            <Line sw={2.500}>
              <path d="M19 4l3.200 8.800L31 16l-8.800 3.200L19 28l-3.200-8.800L7 16l8.800-3.200z" />
              <path d="M4.500 1v7M1 4.500h7M4.500 24v7M1 27.500h7" strokeWidth="2.200" />
            </Line>
            <Line sw={2.600}>
              <rect x="3" y="2" width="18" height="12" rx="2.500" /><path d="M17 2.500v11M24 8h2.500a2 2 0 0 1 2 2v10a2 2 0 0 1-2 2H9a2 2 0 0 1-2-2v-1" />
              <rect x="4.500" y="25" width="26" height="5" rx="2" fill="currentColor" /><path d="M16 27.500h4" stroke="#f9f9fb" />
            </Line>
            <Line sw={2.500}><circle cx="16" cy="16" r="14" /><path d="M15.500 8v8.500l6 4" /></Line>
            <StarLine />
            <Line sw={2.400}>
              <path d="M13.400 2h5.200l.9 4.200 2.700 1.500 4.100-1.300 2.600 4.500-3.200 2.900v3.200l3.200 2.900-2.600 4.500-4.100-1.300-2.700 1.500-.9 4.400h-5.200l-.9-4.400-2.700-1.500-4.100 1.300-2.600-4.500 3.200-2.900v-3.200L3.100 10.900l2.600-4.500 4.100 1.300 2.700-1.500z" strokeWidth="2.400" />
              <circle cx="16" cy="15.700" r="4.600" />
            </Line>
          </Rail>

          <Viewport>
            <Site>
              <SiteHeader>
                <Logo>EKWA <i>MARKETING</i></Logo>
                <MainNav>
                  <NavLink>Home</NavLink>
                  <NavLink $active>Tickets</NavLink>
                  <NavLink>Knowledgebase</NavLink>
                  <NavLink>Users</NavLink>
                  <NavLink>Reports</NavLink>
                </MainNav>
              </SiteHeader>
              <SubNav>
                <Pill $width={266}>Manage Tickets</Pill>
                <Pill $width={185}>Search<Caret /></Pill>
                <Pill $width={215}>New Ticket</Pill>
                <Pill $width={152}>Views</Pill>
                <Pill $width={177}>Filters<Caret /></Pill>
              </SubNav>
              <DarkStrip />

              <Columns>
                <Sidebar>
                  <SearchHead><SearchBox>Search</SearchBox></SearchHead>
                  <Panel>
                    <PanelTitle>TAG CLOUD</PanelTitle>
                    <TagLink>javascript:void0 (189)</TagLink>
                  </Panel>
                  <Panel>
                    <PanelTitle>QUICK FILTER</PanelTitle>
                    <Tree>
                      {filters.map(f => <TreeNode key={f.label} item={f} />)}
                      <TreeNode open item={{ label: 'Marketing Stage\nCoordinator - WI Email\nUnassigned Tickets', count: '(21)', icon: <FolderIcon /> }} />
                      <SubTree>
                        {stageFilters.map(f => <TreeNode key={f.label} item={f} />)}
                      </SubTree>
                    </Tree>
                  </Panel>
                </Sidebar>
                <Splitter />

                <Main>
                  <ActionRow>
                    <QueryBox />
                    <ThinRule />
                    <ActionGroup>
                      <Action><SpamIcon />Spam</Action>
                      <Action><WatchIcon />Watch</Action>
                      <Action><Ticket size={32}><path d="M17 24l7-7v4h8v7h-8v4z" fill="#6fb04f" stroke="#4f8f35" /></Ticket>Reply</Action>
                      <Action><MergeIcon />Merge</Action>
                    </ActionGroup>
                  </ActionRow>

                  <GridFrame>
                    <GridRow>
                      <HeadCell $box><Checkbox /></HeadCell>
                      <HeadCell />
                      <HeadCell />
                      {headings.map(h => (
                        <HeadCell key={h} $sorted={h === 'LAST ACTIVITY'}>
                          {h}
                          {h === 'LAST ACTIVITY' && (
                            <svg width="16" height="10" viewBox="0 0 16 10" fill="none" stroke="#1c3768" strokeWidth="2.500"><path d="M1 1l7 7 7-7" /></svg>
                          )}
                        </HeadCell>
                      ))}
                    </GridRow>
                    <GridRow>
                      <Cell $pad={10} $drop={11}><Checkbox /></Cell>
                      <Cell $pad={9} $drop={2}><Ticket /></Cell>
                      <Cell $pad={11} $drop={5}><ChatIcon /></Cell>
                      <Cell $pad={9} $tone="link" $track={-0.35}>1726836</Cell>
                      <Cell $pad={10} $tone="link" $track={0.88}>{'PL meeting\ntodos - Dr.\nPramod\nThomas -\nEmmanuel\nDental &\nOrthodontics'}</Cell>
                      <Cell $pad={10}>{'Thilini\nMaduhan...'}</Cell>
                      <Cell $align="center" $tone="age" $track={0.7}>72d 16h 55m</Cell>
                      <Cell $align="center" $track={0.2}>{'11 May\n2026\n08:53\nAM'}</Cell>
                      <Cell $align="center" $tone="age" $track={0.7}>72d 16h 55m</Cell>
                      <Cell />
                      <Cell $align="center" $tone="late" $track={1}>Overdue</Cell>
                      <Cell $align="center">Initial Reply</Cell>
                      <Cell $align="center" $tone="status">{'New\nTickets'}</Cell>
                    </GridRow>
                  </GridFrame>
                  <Pager>Page 1 of 1</Pager>
                </Main>
              </Columns>
            </Site>

            <FindBar>
              <CloseX s={24} sw={2.400} />
              <FindField>thilini</FindField>
              <Line w={24} h={14} sw={2.400}><path d="M1.500 12.500L12 2l10.500 10.500" /></Line>
              <ToolSlot $gap={36}><Line w={24} h={14} sw={2.400}><path d="M1.500 1.500L12 12 22.500 1.500" /></Line></ToolSlot>
              <Options>
                {['Highlight All', 'Match Case', 'Match Diacritics', 'Whole Words'].map(o => (
                  <Option key={o}><Checkbox $size={32} /><span>{o}</span></Option>
                ))}
              </Options>
              <FindNote>1 of 2 matches</FindNote>
              <FindNote>Reached end of page, continued from top</FindNote>
            </FindBar>
          </Viewport>
        </BrowserBody>
      </BrowserWindow>
      <DockEdge><DockGlint /></DockEdge>

      <Tooltip>
        Screenshot
        <svg width="32" height="20" viewBox="0 0 32 20"><path d="M1 0c4 1 6 4 8 8l5 9q2 3 4 0l5-9c2-4 4-7 8-8z" fill="#e3e3e4" /></svg>
      </Tooltip>
    </Screen>
  );
}
